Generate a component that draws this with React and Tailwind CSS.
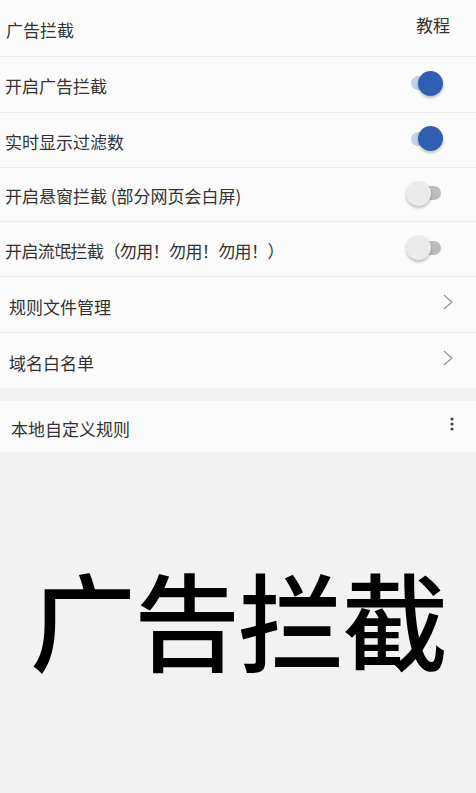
import React from 'react';

const font = { fontFamily: '"Noto Sans CJK SC", "Noto Sans", sans-serif' };

const Toggle = ({ on }) => (
  <div className="relative w-[37px] h-[26px] flex items-center mb-[3px]">
    <div className={`absolute left-[5px] right-[2px] h-[14px] rounded-full ${on ? 'bg-[#c6d1e6]' : 'bg-[#bdbdbd]'}`} />
    <div
      className={`absolute w-[25px] h-[25px] rounded-full shadow-[0_2px_3px_rgba(0,0,0,0.25)] ${
        on ? 'right-0 bg-[#2f5fb3]' : 'left-0 bg-[#ebebeb]'
      }`}
    />
  </div>
);

const Chevron = () => (
  <svg className="mb-[5px]" width="12" height="18" viewBox="0 0 12 18" fill="none" stroke="#9a9a9a" strokeWidth="1.3">
    <path d="M2 2 L10 9 L2 16" />
  </svg>
);

const Row = ({ label, right, h = 'h-[55px]', tight }) => (
  <div className={`${h} flex items-center justify-between pl-[5px] pr-[33px] border-b border-[#ececec]`}>
    <span className={`text-[17px] text-[#333] mt-[3px] ${tight ? 'tracking-[-0.6px]' : ''}`}>{label}</span>
    {right}
  </div>
);

export default function App() {
  return (
    <div className="w-[476px] h-[793px] bg-[#f2f2f2] flex flex-col overflow-hidden" style={font}>
      <div className="bg-[#fbfbfb]">
        <div className="h-[57px] flex items-center justify-between pl-[6px] pr-[26px] border-b border-[#ececec]">
          <span className="text-[17px] text-[#333] mt-[4px]">广告拦截</span>
          <span className="text-[17px] text-[#333] mb-[6px]">教程</span>
        </div>
        <Row label="开启广告拦截" right={<Toggle on />} h="h-[56px]" />
        <Row label="实时显示过滤数" right={<Toggle on />} />
        <Row label="开启悬窗拦截 (部分网页会白屏)" right={<Toggle />} h="h-[54px]" />
        <Row label="开启流氓拦截（勿用！勿用！勿用！）" right={<Toggle />} tight />
        <div className="h-[56px] flex items-center justify-between pl-[9px] pr-[22px] border-b border-[#ececec]">
          <span className="text-[17px] text-[#333] mt-[4px]">规则文件管理</span>
          <Chevron />
        </div>
        <div className="h-[55px] flex items-center justify-between pl-[9px] pr-[22px]">
          <span className="text-[17px] text-[#333] mt-[4px]">域名白名单</span>
          <Chevron />
        </div>
      </div>
      <div className="h-[13px]" />
      <div className="bg-[#fbfbfb] h-[51px] flex items-center justify-between pl-[11px] pr-[22px]">
        <span className="text-[17px] text-[#333] mt-[4px]">本地自定义规则</span>
        <svg className="mb-[6px]" width="4" height="14" viewBox="0 0 4 14" fill="#444">
          <circle cx="2" cy="2" r="1.6" />
          <circle cx="2" cy="7" r="1.6" />
          <circle cx="2" cy="12" r="1.6" />
        </svg>
      </div>
      <div className="flex-1 flex items-center justify-center pb-[12px]">
        <span className="text-[106px] leading-none text-black font-medium tracking-[-2px]">广告拦截</span>
      </div>
    </div>
  );
}
